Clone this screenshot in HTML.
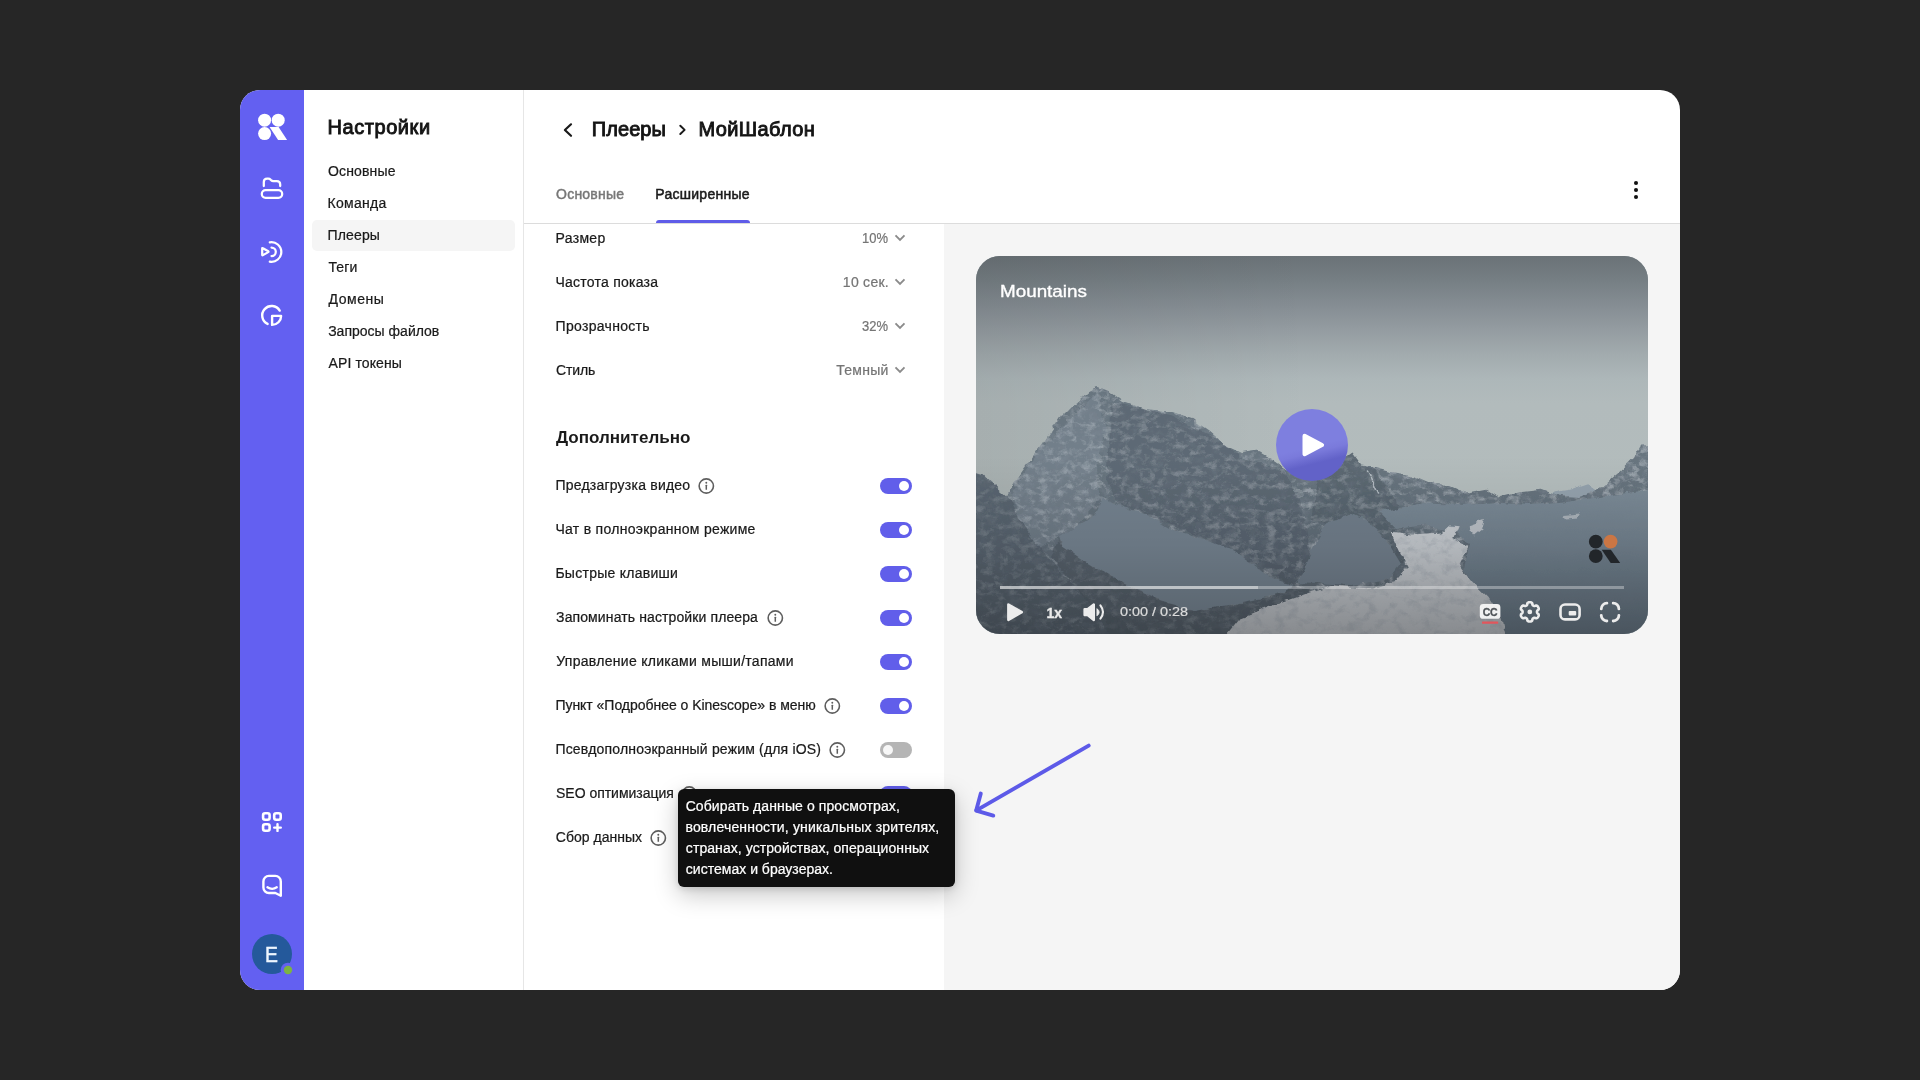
<!DOCTYPE html><html lang="ru"><head><meta charset="utf-8"><title>Настройки — Плееры — МойШаблон</title><style>
*{box-sizing:border-box}
html,body{margin:0;padding:0}
body{width:1920px;height:1080px;background:#262626;overflow:hidden;position:relative;font-family:"Liberation Sans",sans-serif;color:#1a1a1a}
.t{position:absolute;white-space:pre;line-height:1;margin:0;padding:0;font-weight:400}
.stage{position:absolute;left:0;top:0;width:1920px;height:1080px;will-change:transform}
.app{position:absolute;left:240px;top:90px;width:1440px;height:900px;background:#fff;border-radius:20px;overflow:hidden}
.rail{position:absolute;left:240px;top:90px;width:64px;height:900px;background:#6360f1;border-radius:20px 0 0 20px}
.nav{position:absolute;left:304px;top:90px;width:220px;height:900px;border-right:1px solid #e6e6e6}
.navsel{position:absolute;left:312px;top:220px;width:203px;height:31px;background:#f5f5f5;border-radius:5px}
.hdrline{position:absolute;left:524px;top:223px;width:1156px;height:1px;background:#dcdcdc}
.tabline{position:absolute;left:656px;top:220px;width:93.5px;height:3.5px;background:#5f5ce8;border-radius:3px 3px 0 0}
.preview{position:absolute;left:944px;top:224px;width:736px;height:766px;background:#f5f5f5;border-radius:0 0 20px 0}
.tg{position:absolute;left:880px;width:32px;height:16px;border-radius:8px;background:#615eea}
.tg i{position:absolute;right:3px;top:3px;width:10px;height:10px;border-radius:50%;background:#fff}
.tg.off{background:#b5b5b5}
.tg.off i{right:auto;left:3px;background:#f7f7f7}
.tip{position:absolute;left:678px;top:789px;width:277px;height:98px;background:#101010;border-radius:6px;box-shadow:0 8px 24px rgba(0,0,0,.22),0 2px 6px rgba(0,0,0,.12)}
.player{position:absolute;left:976px;top:256px;width:672px;height:378px;border-radius:24px;overflow:hidden;background:#7f8b92}
svg{position:absolute;overflow:visible}
.av{transform:scaleX(.88);transform-origin:0 50%}
</style></head><body>
<main class="stage">
<div class="app"></div>
<aside class="rail"></aside>
<svg class="railicons" style="left:240px;top:90px" width="64" height="900" viewBox="240 90 64 900">
<g fill="#fff"><circle cx="264.6" cy="120.2" r="6.5"/><circle cx="278.2" cy="120.2" r="6.5"/><circle cx="264.6" cy="133.6" r="6.5"/><path d="M269.6 127.1 H278.6 L287.1 139.9 H278.1 Z"/></g>
<g fill="none" stroke="#fff" stroke-width="2.25" stroke-linecap="round" stroke-linejoin="round">
<path d="M263.8 186 V182 Q263.8 178.6 267.2 178.6 H268.2 Q269.7 178.6 270.7 179.7 L271.1 180.1 Q272 181 273.3 181 H276.8 Q280.2 181 280.2 184.4 V186"/>
<rect x="261.8" y="190.2" width="20.4" height="7.6" rx="3.8"/>
<path d="M262.2 248.6 V254.7 Q262.2 255.6 263 255.1 L268.2 252.1 Q268.9 251.65 268.2 251.2 L263 248.2 Q262.2 247.7 262.2 248.6 Z"/>
<path d="M271.5 247.5 A4.3 4.3 0 0 1 271.5 256.1"/>
<path d="M269.8 242.4 A9.76 9.76 0 1 1 269.8 261.6"/>
<path d="M279.7 310.6 A9.4 9.4 0 1 0 267.6 323.9" stroke-width="2.4"/>
<path d="M272.1 315.9 H281.1 A9 9 0 0 1 272.1 324.9 Z" stroke-width="2.4"/>
<g stroke-width="2.6"><rect x="263.1" y="813.3" width="6.5" height="6.5" rx="2"/><rect x="274.2" y="813.3" width="6.5" height="6.5" rx="2"/><rect x="263.1" y="824.3" width="6.5" height="6.5" rx="2"/><path d="M274.2 827.6 H280.8 M277.5 824.3 V830.9" stroke-width="2.4"/></g>
<path d="M280.8 895.7 V881.4 A5.5 5.5 0 0 0 275.3 875.9 H268.9 A5.5 5.5 0 0 0 263.4 881.4 V887.5 A5.5 5.5 0 0 0 268.9 893 H275.4 Z" stroke-width="2.4"/>
<path d="M267.4 887.3 Q272.1 890.5 276.8 887.3"/>
</g>
<circle cx="272" cy="954" r="20" fill="#24599b"/><circle cx="288" cy="970" r="7.3" fill="#6360f1"/><circle cx="288" cy="970" r="4.2" fill="#7cb342"/>
</svg>
<span class="t av" style="top:943.78px;font-size:22px;left:265.01px;color:#eef6ff;-webkit-text-stroke:0.45px #eef6ff;">E</span>
<nav class="nav"></nav><div class="navsel"></div>
<h2 class="t" style="top:116.57px;font-size:20px;left:327.49px;color:#141414;letter-spacing:0.563px;-webkit-text-stroke:0.9px #141414;">Настройки</h2>
<a class="t" style="top:163.75px;font-size:14px;left:327.95px;letter-spacing:0.167px;-webkit-text-stroke:0.22px #1a1a1a;">Основные</a>
<a class="t" style="top:195.75px;font-size:14px;left:327.52px;letter-spacing:0.290px;-webkit-text-stroke:0.22px #1a1a1a;">Команда</a>
<a class="t" style="top:227.75px;font-size:14px;left:327.52px;letter-spacing:0.139px;-webkit-text-stroke:0.22px #1a1a1a;">Плееры</a>
<a class="t" style="top:259.75px;font-size:14px;left:328.39px;letter-spacing:0.145px;-webkit-text-stroke:0.22px #1a1a1a;">Теги</a>
<a class="t" style="top:291.75px;font-size:14px;left:328.61px;letter-spacing:0.503px;-webkit-text-stroke:0.22px #1a1a1a;">Домены</a>
<a class="t" style="top:323.75px;font-size:14px;left:328.17px;letter-spacing:0.010px;-webkit-text-stroke:0.22px #1a1a1a;">Запросы файлов</a>
<a class="t" style="top:355.75px;font-size:14px;left:328.61px;letter-spacing:0.100px;-webkit-text-stroke:0.22px #1a1a1a;">API токены</a>
<svg style="left:560px;top:120px" width="16" height="20" viewBox="0 0 16 20"><path d="M11 4.3 L4.9 10 L11 15.8" fill="none" stroke="#1a1a1a" stroke-width="2.2" stroke-linecap="round" stroke-linejoin="round"/></svg>
<h1 class="t" style="top:119.47px;font-size:20px;left:591.79px;color:#141414;letter-spacing:0.063px;-webkit-text-stroke:0.9px #141414;">Плееры</h1>
<svg style="left:676px;top:122px" width="12" height="16" viewBox="0 0 12 16"><path d="M4.3 3.8 L8.6 7.9 L4.3 12" fill="none" stroke="#1a1a1a" stroke-width="2" stroke-linecap="round" stroke-linejoin="round"/></svg>
<h1 class="t" style="top:119.47px;font-size:20px;left:698.49px;color:#141414;letter-spacing:0.382px;-webkit-text-stroke:0.9px #141414;">МойШаблон</h1>
<span class="t" style="top:187.05px;font-size:14px;left:556.07px;color:#777777;letter-spacing:0.219px;-webkit-text-stroke:0.45px #777777;">Основные</span>
<span class="t" style="top:187.05px;font-size:14px;left:655.36px;letter-spacing:0.255px;-webkit-text-stroke:0.5px #1a1a1a;">Расширенные</span>
<div class="tabline"></div><div class="hdrline"></div>
<svg style="left:1632px;top:179px" width="8" height="22" viewBox="0 0 8 22"><circle cx="4" cy="4" r="2.05" fill="#111"/><circle cx="4" cy="11" r="2.05" fill="#111"/><circle cx="4" cy="18" r="2.05" fill="#111"/></svg>
<span class="t" style="top:230.55px;font-size:14px;left:555.52px;letter-spacing:0.323px;-webkit-text-stroke:0.22px #1a1a1a;">Размер</span>
<span class="t" style="top:230.55px;font-size:14px;left:861.90px;transform:scaleX(0.9267);transform-origin:0 50%;color:#757575;-webkit-text-stroke:0.22px #757575;">10%</span>
<svg style="left:894px;top:234.3px" width="12" height="8" viewBox="0 0 12 8"><path d="M1.5 1.4 L6 5.9 L10.5 1.4" fill="none" stroke="#8b8b8b" stroke-width="1.9"/></svg>
<span class="t" style="top:274.55px;font-size:14px;left:555.52px;letter-spacing:0.236px;-webkit-text-stroke:0.22px #1a1a1a;">Частота показа</span>
<span class="t" style="top:274.55px;font-size:14px;right:1030.97px;color:#757575;letter-spacing:0.276px;-webkit-text-stroke:0.22px #757575;">10 сек.</span>
<svg style="left:894px;top:278.3px" width="12" height="8" viewBox="0 0 12 8"><path d="M1.5 1.4 L6 5.9 L10.5 1.4" fill="none" stroke="#8b8b8b" stroke-width="1.9"/></svg>
<span class="t" style="top:318.55px;font-size:14px;left:555.52px;letter-spacing:0.309px;-webkit-text-stroke:0.22px #1a1a1a;">Прозрачность</span>
<span class="t" style="top:318.55px;font-size:14px;left:861.90px;transform:scaleX(0.9265);transform-origin:0 50%;color:#757575;-webkit-text-stroke:0.22px #757575;">32%</span>
<svg style="left:894px;top:322.3px" width="12" height="8" viewBox="0 0 12 8"><path d="M1.5 1.4 L6 5.9 L10.5 1.4" fill="none" stroke="#8b8b8b" stroke-width="1.9"/></svg>
<span class="t" style="top:362.55px;font-size:14px;left:555.95px;letter-spacing:-0.091px;-webkit-text-stroke:0.22px #1a1a1a;">Стиль</span>
<span class="t" style="top:362.55px;font-size:14px;right:1031.45px;color:#757575;letter-spacing:0.244px;-webkit-text-stroke:0.22px #757575;">Темный</span>
<svg style="left:894px;top:366.3px" width="12" height="8" viewBox="0 0 12 8"><path d="M1.5 1.4 L6 5.9 L10.5 1.4" fill="none" stroke="#8b8b8b" stroke-width="1.9"/></svg>
<h3 class="t" style="top:429.76px;font-size:16px;left:556.20px;transform:scaleX(1.0642);transform-origin:0 50%;font-weight:700;">Дополнительно</h3>
<span class="t" style="top:478.45px;font-size:14px;left:555.42px;letter-spacing:0.222px;-webkit-text-stroke:0.22px #1a1a1a;">Предзагрузка видео</span>
<svg class="info" style="left:697.4px;top:476.8px" width="18" height="18" viewBox="0 0 18 18"><circle cx="9.3" cy="9" r="7.15" fill="none" stroke="#5e5e5e" stroke-width="1.6"/><circle cx="9.3" cy="5.7" r="0.95" fill="#5e5e5e"/><rect x="8.55" y="7.8" width="1.5" height="5" rx="0.4" fill="#5e5e5e"/></svg>
<div class="tg" style="top:478px"><i></i></div>
<span class="t" style="top:522.45px;font-size:14px;left:555.42px;letter-spacing:0.285px;-webkit-text-stroke:0.22px #1a1a1a;">Чат в полноэкранном режиме</span>
<div class="tg" style="top:522px"><i></i></div>
<span class="t" style="top:566.45px;font-size:14px;left:555.42px;letter-spacing:0.269px;-webkit-text-stroke:0.22px #1a1a1a;">Быстрые клавиши</span>
<div class="tg" style="top:566px"><i></i></div>
<span class="t" style="top:610.45px;font-size:14px;left:556.07px;letter-spacing:0.112px;-webkit-text-stroke:0.22px #1a1a1a;">Запоминать настройки плеера</span>
<svg class="info" style="left:766px;top:608.8px" width="18" height="18" viewBox="0 0 18 18"><circle cx="9.3" cy="9" r="7.15" fill="none" stroke="#5e5e5e" stroke-width="1.6"/><circle cx="9.3" cy="5.7" r="0.95" fill="#5e5e5e"/><rect x="8.55" y="7.8" width="1.5" height="5" rx="0.4" fill="#5e5e5e"/></svg>
<div class="tg" style="top:610px"><i></i></div>
<span class="t" style="top:654.45px;font-size:14px;left:556.29px;letter-spacing:0.286px;-webkit-text-stroke:0.22px #1a1a1a;">Управление кликами мыши/тапами</span>
<div class="tg" style="top:654px"><i></i></div>
<span class="t" style="top:698.45px;font-size:14px;left:555.42px;letter-spacing:-0.030px;-webkit-text-stroke:0.22px #1a1a1a;">Пункт «Подробнее о Kinescope» в меню</span>
<svg class="info" style="left:823px;top:696.8px" width="18" height="18" viewBox="0 0 18 18"><circle cx="9.3" cy="9" r="7.15" fill="none" stroke="#5e5e5e" stroke-width="1.6"/><circle cx="9.3" cy="5.7" r="0.95" fill="#5e5e5e"/><rect x="8.55" y="7.8" width="1.5" height="5" rx="0.4" fill="#5e5e5e"/></svg>
<div class="tg" style="top:698px"><i></i></div>
<span class="t" style="top:742.45px;font-size:14px;left:555.42px;letter-spacing:0.179px;-webkit-text-stroke:0.22px #1a1a1a;">Псевдополноэкранный режим (для iOS)</span>
<svg class="info" style="left:828px;top:740.8px" width="18" height="18" viewBox="0 0 18 18"><circle cx="9.3" cy="9" r="7.15" fill="none" stroke="#5e5e5e" stroke-width="1.6"/><circle cx="9.3" cy="5.7" r="0.95" fill="#5e5e5e"/><rect x="8.55" y="7.8" width="1.5" height="5" rx="0.4" fill="#5e5e5e"/></svg>
<div class="tg off" style="top:742px"><i></i></div>
<span class="t" style="top:786.45px;font-size:14px;left:556.07px;letter-spacing:-0.029px;-webkit-text-stroke:0.22px #1a1a1a;">SEO оптимизация</span>
<svg class="info" style="left:680px;top:784.8px" width="18" height="18" viewBox="0 0 18 18"><circle cx="9.3" cy="9" r="7.15" fill="none" stroke="#5e5e5e" stroke-width="1.6"/><circle cx="9.3" cy="5.7" r="0.95" fill="#5e5e5e"/><rect x="8.55" y="7.8" width="1.5" height="5" rx="0.4" fill="#5e5e5e"/></svg>
<div class="tg" style="top:786px"><i></i></div>
<span class="t" style="top:830.45px;font-size:14px;left:555.85px;letter-spacing:0.006px;-webkit-text-stroke:0.22px #1a1a1a;">Сбор данных</span>
<svg class="info" style="left:649px;top:828.8px" width="18" height="18" viewBox="0 0 18 18"><circle cx="9.3" cy="9" r="7.15" fill="none" stroke="#5e5e5e" stroke-width="1.6"/><circle cx="9.3" cy="5.7" r="0.95" fill="#5e5e5e"/><rect x="8.55" y="7.8" width="1.5" height="5" rx="0.4" fill="#5e5e5e"/></svg>
<section class="preview"></section>
<div class="player">
<svg class="scene" style="left:0;top:0" width="672" height="378" viewBox="0 0 672 378">
<defs><linearGradient id="sky" x1="0" y1="0" x2="0" y2="1"><stop offset="0" stop-color="#6a7277"/><stop offset="0.065" stop-color="#767f84"/><stop offset="0.13" stop-color="#858d93"/><stop offset="0.195" stop-color="#949ca1"/><stop offset="0.26" stop-color="#a2abae"/><stop offset="0.325" stop-color="#adb7b9"/><stop offset="0.39" stop-color="#b2bbbc"/><stop offset="0.6" stop-color="#b3bcbc"/><stop offset="1" stop-color="#b1bbbc"/></linearGradient><linearGradient id="vig" x1="0" y1="0" x2="1" y2="0"><stop offset="0" stop-color="#000" stop-opacity="0.07"/><stop offset="0.5" stop-color="#000" stop-opacity="0"/></linearGradient><linearGradient id="rockg" x1="0" y1="0" x2="0" y2="1"><stop offset="0.3" stop-color="#68757f"/><stop offset="0.62" stop-color="#5f6b76"/><stop offset="1" stop-color="#545f69"/></linearGradient><linearGradient id="slopeg" x1="0" y1="0" x2="0" y2="1"><stop offset="0" stop-color="#7b8a96"/><stop offset="0.5" stop-color="#6c7b88"/><stop offset="1" stop-color="#5f6d7a"/></linearGradient><linearGradient id="brg" x1="0" y1="0" x2="0" y2="1"><stop offset="0" stop-color="#c6cbd0"/><stop offset="1" stop-color="#b0b4b9"/></linearGradient><linearGradient id="bot" x1="0" y1="0" x2="0" y2="1"><stop offset="0" stop-color="#000" stop-opacity="0"/><stop offset="0.5" stop-color="#000" stop-opacity="0.08"/><stop offset="1" stop-color="#000" stop-opacity="0.24"/></linearGradient><filter id="snowf" x="0" y="0" width="100%" height="100%"><feTurbulence type="fractalNoise" baseFrequency="0.11 0.15" numOctaves="4" seed="11"/><feColorMatrix type="matrix" values="0 0 0 0 0.82  0 0 0 0 0.85  0 0 0 0 0.88  3.0 0 0 0 -1.42"/></filter><filter id="darkf" x="0" y="0" width="100%" height="100%"><feTurbulence type="fractalNoise" baseFrequency="0.09 0.12" numOctaves="4" seed="23"/><feColorMatrix type="matrix" values="0 0 0 0 0.22  0 0 0 0 0.26  0 0 0 0 0.31  0 3.0 0 0 -1.42"/></filter><filter id="rough" x="-2%" y="-2%" width="104%" height="104%"><feTurbulence type="fractalNoise" baseFrequency="0.07 0.09" numOctaves="3" seed="5" result="n"/><feDisplacementMap in="SourceGraphic" in2="n" scale="7" xChannelSelector="R" yChannelSelector="G"/></filter><clipPath id="mclip"><polygon points="-14.0,213.0 7.3,219.0 19.0,230.0 31.8,241.0 39.0,226.4 51.3,209.3 68.4,184.9 85.5,160.4 97.8,148.2 112.4,136.0 122.2,131.1 132.0,134.8 146.6,145.8 171.0,154.3 195.5,156.8 215.0,162.9 232.2,175.1 249.3,189.8 264.0,197.0 281.0,194.6 293.3,202.0 307.9,211.8 320.0,217.0 334.0,216.0 354.0,206.0 368.0,202.0 375.5,196.5 385.0,209.3 399.5,211.8 416.6,216.6 433.8,219.0 453.3,227.6 472.9,228.9 492.4,237.4 512.0,233.7 524.0,241.0 543.7,236.2 565.7,233.7 580.4,239.5 604.0,241.0 620.0,235.0 629.3,228.9 643.9,216.6 656.1,204.4 665.9,189.8 686.0,187.3 686.0,392.0 -14.0,392.0"/></clipPath><clipPath id="bclip"><polygon points="414.6,275.7 436.4,278.4 465.4,276.6 474.4,268.4 481.7,269.3 476.3,282.0 492.6,291.0 483.5,309.2 496.2,325.5 512.5,341.8 525.2,361.8 532.4,392.0 239.0,392.0 264.0,362.0 294.0,350.0 324.0,340.0 354.8,329.1 396.5,332.8 418.3,325.5 430.9,311.0 421.9,291.1"/></clipPath></defs>
<rect width="672" height="378" fill="url(#sky)"/><rect width="672" height="378" fill="url(#vig)"/>
<g filter="url(#rough)">
<polygon points="569.0,240.0 584.0,235.0 595.0,233.2 604.0,230.0 612.2,227.3 619.5,232.5 628.0,236.0 634.0,244.0 569.0,244.0" fill="#93a1ac"/>
<polygon points="-14.0,213.0 7.3,219.0 19.0,230.0 31.8,241.0 39.0,226.4 51.3,209.3 68.4,184.9 85.5,160.4 97.8,148.2 112.4,136.0 122.2,131.1 132.0,134.8 146.6,145.8 171.0,154.3 195.5,156.8 215.0,162.9 232.2,175.1 249.3,189.8 264.0,197.0 281.0,194.6 293.3,202.0 307.9,211.8 320.0,217.0 334.0,216.0 354.0,206.0 368.0,202.0 375.5,196.5 385.0,209.3 399.5,211.8 416.6,216.6 433.8,219.0 453.3,227.6 472.9,228.9 492.4,237.4 512.0,233.7 524.0,241.0 543.7,236.2 565.7,233.7 580.4,239.5 604.0,241.0 620.0,235.0 629.3,228.9 643.9,216.6 656.1,204.4 665.9,189.8 686.0,187.3 686.0,392.0 -14.0,392.0" fill="url(#rockg)"/>
<g clip-path="url(#mclip)">
<rect width="672" height="378" filter="url(#darkf)" opacity="0.42"/>
<rect width="672" height="378" filter="url(#snowf)" opacity="0.38"/>
<polygon points="64.0,194.0 99.0,159.0 120.0,137.0 130.0,174.0 120.0,214.0 125.0,241.0 99.0,271.0 83.0,281.0 64.0,292.0 44.0,264.0 36.0,239.0" fill="#8895a2" opacity="0.32"/>
<polygon points="136.0,146.0 195.0,160.0 232.0,178.0 264.0,200.0 308.0,215.0 324.0,244.0 336.0,304.0 317.0,330.0 277.0,308.0 227.0,282.0 178.0,262.0 144.0,249.0 130.0,224.0" fill="#46515c" opacity="0.3"/>
<polygon points="375.5,196.5 386.0,210.0 400.0,214.0 419.0,244.0 432.0,304.0 425.0,308.0 414.0,290.0 400.0,273.0 388.0,264.0 375.0,258.0 364.0,261.0 350.0,268.0 336.0,264.0 342.0,224.0 359.0,206.0" fill="#424d57" opacity="0.32"/>
<polygon points="404.0,256.0 444.0,247.0 484.0,249.0 524.0,247.0 554.0,249.0 584.0,247.0 624.0,241.0 686.0,232.0 686.0,392.0 524.0,392.0 504.0,344.0 489.0,314.0 494.0,289.0 479.0,274.0 444.0,269.0 419.0,272.0" fill="url(#slopeg)"/>
<path d="M391.5 216.0 L396.0 226.0 L401.5 238.0" fill="none" stroke="#c3cad1" stroke-width="1.6" stroke-linecap="round" opacity="0.8"/>
<polygon points="-14.0,213.0 7.3,219.0 19.0,230.0 31.8,241.0 44.0,264.0 64.0,292.0 87.0,319.0 114.0,344.0 144.0,364.0 174.0,392.0 -14.0,392.0" fill="#4f5a64" opacity="0.55"/>
<polygon points="83.0,284.0 111.0,307.0 138.7,323.0 178.0,342.5 218.0,355.5 257.0,348.5 304.0,338.5 317.0,330.5 334.0,334.0 324.0,340.0 294.0,350.0 264.0,362.0 239.0,392.0 144.0,392.0 114.0,350.0 94.0,324.0 74.0,300.0" fill="#4e5963" opacity="0.6"/>
<polygon points="126.8,241.3 142.0,249.0 158.5,255.0 178.3,263.0 198.0,275.0 227.8,282.9 257.5,294.7 277.3,308.6 297.0,322.5 317.0,330.0 304.0,338.0 257.0,348.0 218.0,355.0 178.0,342.0 138.7,322.5 111.0,306.6 87.0,290.8 83.0,281.0 99.0,271.0 118.9,259.0" fill="#73818e"/>
<polygon points="322.0,326.0 336.0,296.0 350.0,268.0 364.0,261.0 375.0,258.0 388.0,264.0 400.0,273.0 414.0,290.0 425.0,308.0 413.0,323.0 375.0,329.0" fill="#6f7d8a"/>
<polygon points="414.6,275.7 436.4,278.4 465.4,276.6 474.4,268.4 481.7,269.3 476.3,282.0 492.6,291.0 483.5,309.2 496.2,325.5 512.5,341.8 525.2,361.8 532.4,392.0 239.0,392.0 264.0,362.0 294.0,350.0 324.0,340.0 354.8,329.1 396.5,332.8 418.3,325.5 430.9,311.0 421.9,291.1" fill="url(#brg)"/>
<rect width="672" height="378" filter="url(#darkf)" opacity="0.28" clip-path="url(#bclip)"/>
<polygon points="492.6,269.3 508.9,263.9 507.1,271.1 498.0,278.4" fill="#b9bec4"/><polygon points="586.8,260.0 604.0,258.4 602.0,262.6 589.0,263.4" fill="#a9b1b8"/>
</g>
</g>
<rect y="200" width="672" height="178" fill="url(#bot)"/>
</svg>
<svg class="ui" style="left:0;top:0" width="672" height="378" viewBox="976 256 672 378">
<defs><linearGradient id="pb" gradientUnits="userSpaceOnUse" x1="1315.6" y1="445.5" x2="1319.8" y2="462.5"><stop offset="0" stop-color="#7e7fdf"/><stop offset="0.35" stop-color="#7a7adb"/><stop offset="1" stop-color="#6262c8"/></linearGradient></defs>
<circle cx="1312" cy="445" r="36" fill="url(#pb)"/>
<path d="M1304.6 435.9 L1322 445 L1304.6 454.1 Z" fill="#fff" stroke="#fff" stroke-width="4.2" stroke-linejoin="round"/>
<g fill="#22262a"><circle cx="1595.8" cy="541.7" r="6.9"/><circle cx="1595.8" cy="556.1" r="6.9"/><path d="M1601.7 549.8 H1610.9 L1620.2 562.9 H1610.7 Z"/></g><circle cx="1610.6" cy="541.6" r="6.9" fill="#cb7644"/>
<rect x="1000" y="586" width="624" height="3" fill="#fff" fill-opacity="0.33"/><rect x="1000" y="586" width="258" height="3" fill="#fff" fill-opacity="0.38"/>
<path d="M1008.4 604.6 L1021.8 612.2 L1008.4 619.8 Z" fill="#ececec" stroke="#ececec" stroke-width="2.6" stroke-linejoin="round"/>
<path d="M1084.6 609.3 H1087.6 L1093.8 604.4 V620 L1087.6 615.1 H1084.6 Z" fill="#ececec" stroke="#ececec" stroke-width="2.4" stroke-linejoin="round"/>
<path d="M1097 608.7 Q1101.3 612.2 1097 615.7 Z" fill="#ececec" stroke="#ececec" stroke-width="1" stroke-linejoin="round"/>
<path d="M1100.4 605.4 Q1105.6 612.2 1100.4 618.6" fill="none" stroke="#ececec" stroke-width="2.1" stroke-linecap="round"/>
<rect x="1479.8" y="604" width="20.6" height="14.8" rx="3.4" fill="#f1f1f1"/><rect x="1482" y="621.4" width="16.2" height="2.4" rx="0.6" fill="#e2565c"/>
<path d="M1529.80 602.25 L1530.31 602.26 L1530.81 602.30 L1531.30 602.45 L1531.74 602.75 L1532.14 603.17 L1532.33 604.13 L1532.51 604.83 L1532.78 605.20 L1533.07 605.48 L1533.39 605.69 L1533.73 605.85 L1534.11 605.96 L1534.57 606.01 L1535.27 605.83 L1536.19 605.51 L1536.75 605.64 L1537.24 605.88 L1537.61 606.23 L1537.89 606.64 L1538.16 607.07 L1538.40 607.52 L1538.62 607.97 L1538.74 608.47 L1538.70 609.01 L1538.53 609.56 L1537.79 610.20 L1537.28 610.71 L1537.10 611.13 L1537.00 611.52 L1536.97 611.90 L1537.00 612.28 L1537.10 612.67 L1537.28 613.09 L1537.79 613.60 L1538.53 614.24 L1538.70 614.79 L1538.74 615.33 L1538.62 615.83 L1538.40 616.28 L1538.16 616.73 L1537.89 617.16 L1537.61 617.57 L1537.24 617.92 L1536.75 618.16 L1536.19 618.29 L1535.27 617.97 L1534.57 617.79 L1534.11 617.84 L1533.73 617.95 L1533.39 618.11 L1533.07 618.32 L1532.78 618.60 L1532.51 618.97 L1532.33 619.67 L1532.14 620.63 L1531.74 621.05 L1531.30 621.35 L1530.81 621.50 L1530.31 621.54 L1529.80 621.55 L1529.29 621.54 L1528.79 621.50 L1528.30 621.35 L1527.86 621.05 L1527.46 620.63 L1527.27 619.67 L1527.09 618.97 L1526.82 618.60 L1526.53 618.32 L1526.21 618.11 L1525.87 617.95 L1525.49 617.84 L1525.03 617.79 L1524.33 617.97 L1523.41 618.29 L1522.85 618.16 L1522.36 617.92 L1521.99 617.57 L1521.71 617.16 L1521.44 616.73 L1521.20 616.28 L1520.98 615.83 L1520.86 615.33 L1520.90 614.79 L1521.07 614.24 L1521.81 613.60 L1522.32 613.09 L1522.50 612.67 L1522.60 612.28 L1522.63 611.90 L1522.60 611.52 L1522.50 611.13 L1522.32 610.71 L1521.81 610.20 L1521.07 609.56 L1520.90 609.01 L1520.86 608.47 L1520.98 607.97 L1521.20 607.52 L1521.44 607.07 L1521.71 606.64 L1521.99 606.23 L1522.36 605.88 L1522.85 605.64 L1523.41 605.51 L1524.33 605.83 L1525.03 606.01 L1525.49 605.96 L1525.87 605.85 L1526.21 605.69 L1526.53 605.48 L1526.82 605.20 L1527.09 604.83 L1527.27 604.13 L1527.46 603.17 L1527.86 602.75 L1528.30 602.45 L1528.79 602.30 L1529.29 602.26 Z" fill="none" stroke="#ececec" stroke-width="2.6" stroke-linejoin="round"/><circle cx="1529.8" cy="611.9" r="2.4" fill="#ececec"/>
<rect x="1560.5" y="604.5" width="19.1" height="14.9" rx="4.5" fill="none" stroke="#ececec" stroke-width="2.6"/><rect x="1568.7" y="611" width="7.5" height="4.5" rx="1" fill="#ececec"/>
<g fill="none" stroke="#ececec" stroke-width="2.8" stroke-linecap="round"><path d="M1601.25 608.9 A5.65 5.7 0 0 1 1606.9 603.2"/><path d="M1613.2 603.2 A5.65 5.7 0 0 1 1618.9 608.9"/><path d="M1618.9 615.3 A5.65 5.7 0 0 1 1613.2 621"/><path d="M1606.9 621 A5.65 5.7 0 0 1 1601.25 615.3"/></g>
</svg>

</div>
<span class="t pl" style="top:283.11px;font-size:17px;left:999.90px;transform:scaleX(1.1080);transform-origin:0 50%;color:#ffffff;-webkit-text-stroke:0.35px #ffffff;">Mountains</span>
<span class="t pl" style="top:605.65px;font-size:14px;left:1046.58px;font-weight:700;color:#ececec;letter-spacing:-0.092px;-webkit-text-stroke:0.3px #ececec;">1x</span>
<span class="t pl" style="top:605.40px;font-size:13px;left:1120.46px;transform:scaleX(1.1067);transform-origin:0 50%;color:#dcdcdc;-webkit-text-stroke:0.22px #dcdcdc;">0:00 / 0:28</span>
<span class="t pl" style="top:606.51px;font-size:10.5px;left:1482.75px;font-weight:700;color:#4f5458;letter-spacing:-0.389px;-webkit-text-stroke:0.3px #4f5458;">CC</span>
<svg style="left:960px;top:730px" width="150" height="100" viewBox="960 730 150 100"><g fill="none" stroke="#5d5ae8" stroke-width="3.9" stroke-linecap="round" stroke-linejoin="round"><path d="M1088.7 745.6 L976.4 810.4"/><path d="M980.8 793.6 L976.2 810.6 L993.3 815.6"/></g></svg>
<div class="tip"></div>
<span class="t" style="top:799.35px;font-size:14px;left:685.65px;color:#ffffff;letter-spacing:0.094px;-webkit-text-stroke:0.22px #ffffff;">Собирать данные о просмотрах,</span>
<span class="t" style="top:820.25px;font-size:14px;left:685.44px;color:#ffffff;letter-spacing:0.166px;-webkit-text-stroke:0.22px #ffffff;">вовлеченности, уникальных зрителях,</span>
<span class="t" style="top:841.15px;font-size:14px;left:685.87px;color:#ffffff;letter-spacing:0.065px;-webkit-text-stroke:0.22px #ffffff;">странах, устройствах, операционных</span>
<span class="t" style="top:862.05px;font-size:14px;left:685.87px;color:#ffffff;letter-spacing:0.013px;-webkit-text-stroke:0.22px #ffffff;">системах и браузерах.</span>
</main></body></html>
